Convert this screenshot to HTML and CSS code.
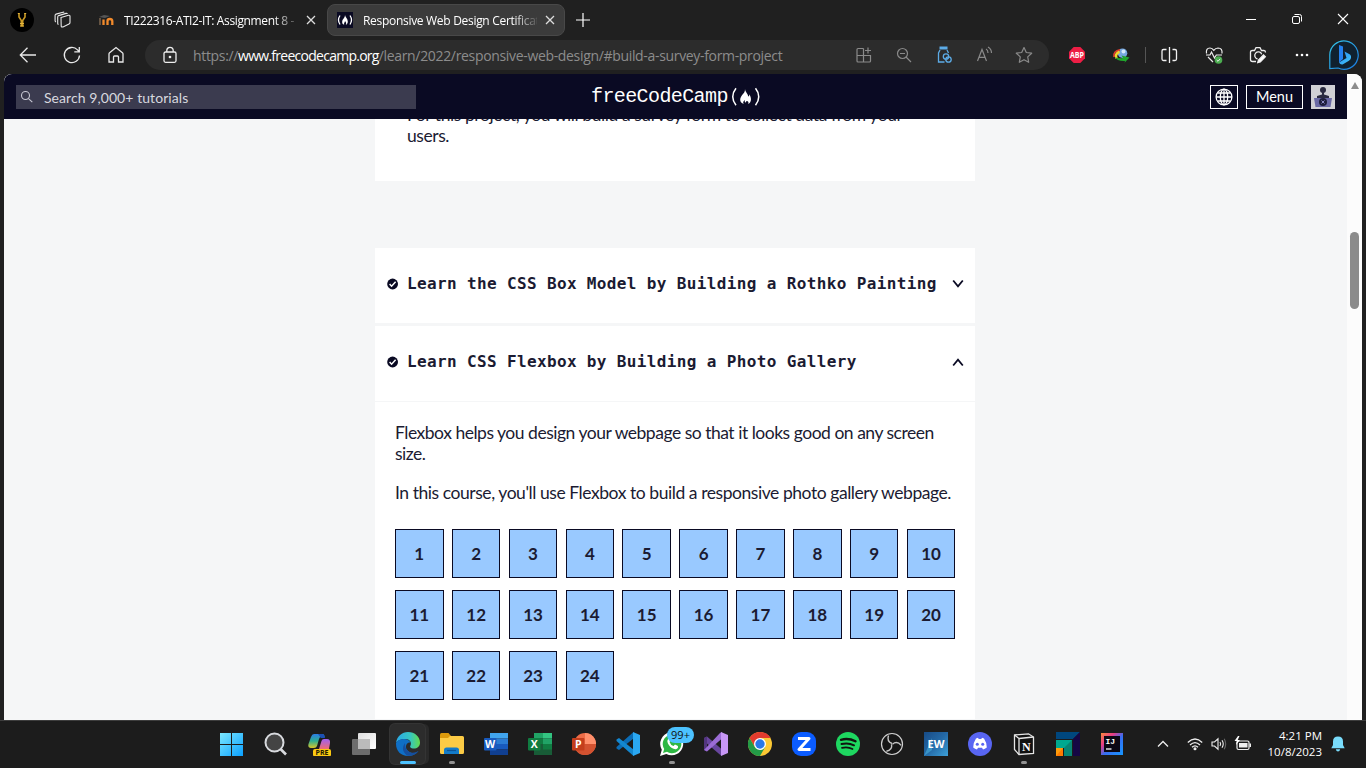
FILE: index.html
```html
<!DOCTYPE html>
<html lang="en">
<head>
<meta charset="utf-8">
<title>Responsive Web Design Certification</title>
<link rel="stylesheet" href="styles.css">
</head>
<body>
<div class="tabs">
  <svg class="profile" width="24" height="24" viewBox="0 0 24 24"><circle cx="12" cy="12" r="12" fill="#000"/><path d="M9 5.500v3.500l2.300 3.500v6M15 5.500v3.500l-2.300 3.500v6" fill="none" stroke="#c99a26" stroke-width="1.600"/><path d="M7.800 5.500h2M14.200 5.500h2M10 15.500h4M10 18h4" stroke="#e4b53c"/></svg>
  <svg class="workspaces" width="18" height="18" viewBox="0 0 18 18" fill="none" stroke="#e8e8e8" stroke-width="1.100"><path d="M7 6.500l7.500-2.200q1.500-.3 1.500 1v6.200q0 1-1 1.500L9 15.900q-1.800.5-1.800-1zM4.500 13.500q-.8-.3-.8-1.300V6q0-1 1-1.400L12 2.400q1-.3 1.500.5M2 11q-.9-.4-.9-1.300V4.500q0-1 1-1.400L9 1.200q.7-.2 1.300.2"/></svg>
  <div class="tab">
    <svg class="favicon" width="16" height="16" viewBox="0 0 16 16"><path d="M1 5L6 3l6 1-5 2z" fill="#555"/><path d="M2 13V6" stroke="#6d5a48" stroke-width="1.800"/><path d="M5.500 13V7.500M9.500 13V9q0-2 2.300-2t2.500 2v4" fill="none" stroke="#f18a2c" stroke-width="2.300"/></svg>
    <span class="title title-a">TI222316-ATI2-IT: Assignment 8 -</span>
    <svg class="close" width="10" height="10" viewBox="0 0 10 10" stroke="#ddd" stroke-width="1.300"><path d="M1 1l8 8M9 1L1 9"/></svg>
  </div>
  <div class="tab active">
    <svg class="favicon" width="16" height="16" viewBox="0 0 16 16"><path fill="#0a0a23" d="M0 0h16v16H0z"/><path d="M3 3.500q-3 4.500 0 9M13 3.500q3 4.500 0 9" fill="none" stroke="#fff" stroke-width="1.300"/><path d="M8 3c.2 2 2.800 3.500 2.800 6.500 0 2-1 3-2 3.300 1-2-.2-2.800-.8-3.800 0 1.500-1.500 2-.8 3.800-1.500-.4-2.200-1.600-2-3.300C5.400 7 8 6 8 3z" fill="#fff"/></svg>
    <span class="title title-b">Responsive Web Design Certificat</span>
    <svg class="close" width="10" height="10" viewBox="0 0 10 10" stroke="#ddd" stroke-width="1.300"><path d="M1 1l8 8M9 1L1 9"/></svg>
  </div>
  <svg class="newtab" width="14" height="14" viewBox="0 0 14 14" stroke="#fff" stroke-width="1.200"><path d="M7 0v14M0 7h14"/></svg>
  <div class="wincontrols">
    <svg width="46" height="20" viewBox="0 0 46 20"><path d="M18 10.500h10" stroke="#fff"/></svg>
    <svg width="46" height="20" viewBox="0 0 46 20" fill="none" stroke="#fff"><rect x="18.500" y="7.500" width="7" height="7" rx="1.500"/><path d="M20.500 5.500h5q2 0 2 2v5"/></svg>
    <svg width="46" height="20" viewBox="0 0 46 20" stroke="#fff" stroke-width="1.100"><path d="M18 5l10 10M28 5L18 15"/></svg>
  </div>
</div>

<div class="toolbar">
  <svg class="tool" viewBox="0 0 44 24" fill="none" stroke="#e8e8e8" stroke-width="1.300"><path d="M30 12H14.500M21.500 4.800L14.300 12l7.200 7.200"/></svg>
  <svg class="tool" viewBox="0 0 44 24" fill="none" stroke="#e8e8e8" stroke-width="1.300"><path d="M29.500 12.500a7.600 7.600 0 1 1-2-5.600l1.500 1.600M29.300 4v4.800h-5"/></svg>
  <svg class="tool" viewBox="0 0 44 24" fill="none" stroke="#e8e8e8" stroke-width="1.300"><path d="M15 19V11q0-.8.600-1.300L22 4.500l6.400 5.200q.6.500.6 1.300V19h-4.500v-5q0-1-1-1h-3q-1 0-1 1v5z"/></svg>
  <div class="address">
    <svg class="lock" width="16" height="18" viewBox="0 0 16 18" fill="none" stroke="#eee" stroke-width="1.300"><rect x="2" y="6" width="12" height="10.300" rx="1.500"/><path d="M4.800 6V4.500a3.200 3.200 0 0 1 6.400 0V6"/><circle cx="8" cy="11" r=".7" fill="#eee"/></svg>
    <span class="url">https://<b>www.freecodecamp.org</b>/learn/2022/responsive-web-design/#build-a-survey-form-project</span>
    <div class="addr-icons">
      <svg width="40" height="20" viewBox="0 0 40 20" fill="none" stroke="#8a8a8a" stroke-width="1.200"><path d="M19.500 3.500H14q-1 0-1 1V16q0 1 1 1h11.500q1 0 1-1v-5.500H13M19.500 3.500V17M24 2.500v6M21 5.500h6"/></svg>
      <svg width="40" height="20" viewBox="0 0 40 20" fill="none" stroke="#8a8a8a" stroke-width="1.200"><circle cx="18.500" cy="8.500" r="5"/><path d="M16 8.500h5M22 12l5 5"/></svg>
      <svg width="40" height="20" viewBox="0 0 40 20" fill="none" stroke="#5cabe6" stroke-width="1.300"><path d="M15.500 3h8" stroke-width="3"/><path d="M16 5l-1.500 3v9h6M23 5l1.500 3"/><circle cx="22" cy="11.500" r="2.700"/><circle cx="24.500" cy="14.500" r="2.700"/></svg>
      <svg width="40" height="20" viewBox="0 0 40 20" fill="none" stroke="#8a8a8a" stroke-width="1.200"><path d="M13.500 16l4.500-11.500L22.500 16M15 12.300h6M22 4q2 1 2 4M24 2q3.500 2 3.500 6"/></svg>
      <svg width="40" height="20" viewBox="0 0 40 20" fill="none" stroke="#8a8a8a" stroke-width="1.200"><path d="M20 2.500l2.300 5 5.400.7-4 3.700 1 5.400-4.700-2.600-4.700 2.600 1-5.400-4-3.700 5.400-.7z" stroke-linejoin="round"/></svg>
    </div>
  </div>
  <svg class="tool abp" viewBox="0 0 44 24"><path d="M18.700 4h6.600L30 8.700v6.600L25.300 20h-6.600L14 15.300V8.700z" fill="#ed1e45"/><text x="22" y="15" text-anchor="middle" textLength="14" lengthAdjust="spacingAndGlyphs" class="badge-text">ABP</text></svg>
  <svg class="tool" viewBox="0 0 44 24"><circle cx="23.500" cy="10.200" r="4.800" fill="#76a7df"/><circle cx="24.500" cy="8.500" r="2" fill="#d4e9fa"/><path d="M21 7q-7 1-6 7" fill="none" stroke="#dd3b2c" stroke-width="1.800"/><path d="M20.500 8.800q-5 2-3 6.500" fill="none" stroke="#f2d52f" stroke-width="2.600"/><path d="M16 14q2 4.500 10 4l-.5 1.800 5-5.300-8-2 1.500 2.500q-5 1-8-1z" fill="#20a62c"/></svg>
  <i class="divider"></i>
  <svg class="tool" viewBox="0 0 44 24" fill="none" stroke="#f0f0f0" stroke-width="1.300"><path d="M22.500 4v16M19.500 6.500h-3q-1.500 0-1.500 1.500v8q0 1.500 1.500 1.500h3M25.500 6.500h2.500q1.500 0 1.500 1.500v8q0 1.500-1.500 1.500h-2.500"/></svg>
  <svg class="tool" viewBox="0 0 44 24" fill="none" stroke="#eee" stroke-width="1.200"><path d="M15.500 10.500Q14.700 5 19 5q2.300 0 3.800 2.300Q24.500 5 27 5q4.600.2 4 5.500M17 14l5 5M15 12h4l1.500-3 3 6 1.800-3H31"/><circle cx="27.500" cy="17" r="3.800" fill="#4cad50" stroke="none"/><path d="M25.700 17l1.300 1.300 2.200-2.500" stroke-width="1"/></svg>
  <svg class="tool cam" viewBox="0 0 44 24" fill="none" stroke="#eee" stroke-width="1.300"><path d="M20 18.500h-3.500q-2 0-2-2V9q0-1.500 2-1.500h2l1.500-2.800h4l1.500 2.800H28q1.500 0 1.500 2"/><path d="M21.500 16a3.600 3.600 0 1 1 4.200-4.800"/><path d="M21.800 19.500l.7-2.500 5-5 1.800 1.800-5 5z" fill="#fff"/></svg>
  <svg class="tool" viewBox="0 0 44 24" fill="#fff"><circle cx="17" cy="12" r="1.300"/><circle cx="22" cy="12" r="1.300"/><circle cx="27" cy="12" r="1.300"/></svg>
  <svg class="bing" width="32" height="32" viewBox="0 0 32 32"><defs><linearGradient id="bg" x2="1" y2="1"><stop stop-color="#35c7e8"/><stop offset="1" stop-color="#1977e0"/></linearGradient><linearGradient id="bb" x2="1" y2="1"><stop stop-color="#2589f5"/><stop offset="1" stop-color="#45c9f6"/></linearGradient></defs><path d="M1.800 29.700V16A14.200 14.200 0 1 1 10 29z" fill="#10212f" stroke="url(#bg)" stroke-width="1.200"/><path d="M11 6l4 1.600v12.500l-4 3.300z" fill="#2480ef"/><path d="M16.500 12.500l5.500 3q1.500 1 1 3.500-.5 2-2.500 3l-5.500 3.200q-2.500.8-4-1.800l7.500-4.500z" fill="url(#bb)"/></svg>
</div>

<div class="viewport">
  <div class="page">
    <header class="site-header">
      <div class="search">
        <svg width="14" height="14" viewBox="0 0 14 14" fill="none" stroke="#c9c9d4" stroke-width="1.100"><circle cx="5.500" cy="5.500" r="4"/><path d="M8.500 8.700l3.800 3.500"/></svg>
        <span>Search 9,000+ tutorials</span>
      </div>
      <div class="logo"><span class="word">freeCodeCamp</span><svg width="34" height="22" viewBox="0 0 34 22"><path d="M8 2.300q-6.500 8.300 0 17M27.500 2.300q6.500 8.300 0 17" fill="none" stroke="#fff" stroke-width="1.500"/><path d="M17 3c.4 3.500 3 4.500 3.200 7.500.9-.3 1.200-1.200 1-2.300 2.500 3.500 2.600 8-1 9.800 1-2-.7-3.300-1.500-3-.7.300-.4 1.500-1.200 1.500-.9 0-.8-1.500-.5-2.500-2 1.500-2.300 2.800-1.200 4-4.500-1.500-4.300-5.500-2-8.500C15.300 7.500 17.300 6 17 3z" fill="#fff"/></svg></div>
      <div class="nav">
        <div class="lang"><svg width="18" height="18" viewBox="0 0 18 18" fill="none" stroke="#fff" stroke-width="1.300"><circle cx="9" cy="9" r="7.900"/><ellipse cx="9" cy="9" rx="3.700" ry="7.900"/><path d="M9 1v16M1 9h16M2.500 5h13M2.500 13h13"/></svg></div>
        <div class="menu">Menu</div>
        <svg class="avatar" width="24" height="24" viewBox="0 0 24 24"><path d="M0 0h24v24H0z" fill="#d0d0d5"/><circle cx="12" cy="5" r="3" fill="#2a2a40"/><path d="M11 7h2v2.500l5 1.500v3H6v-3l5-1.500z" fill="#2a2a40"/><path d="M3 13h18l-1.500 9h-15z" fill="#6a69a5"/><circle cx="12" cy="17" r="4" fill="#1e1e3c"/><path d="M10.500 15.500l3 3M13.500 15.500l-3 3" stroke="#8c8bc4"/></svg>
      </div>
    </header>
    <main class="content">
      <section class="block intro"><p>For this project, you will build a survey form to collect data from your<br>users.</p></section>
      <section class="block course">
        <svg class="check" width="12" height="12" viewBox="0 0 12 12"><circle cx="5.600" cy="6" r="5.400" fill="#0a0a23"/><path d="M2.600 6l2 2.200 4-4.400" fill="none" stroke="#fff" stroke-width="1.500"/></svg>
        <h3>Learn the CSS Box Model by Building a Rothko Painting</h3>
        <svg class="chev" width="12" height="10" viewBox="0 0 12 10"><path d="M1.200 1.500L6 7.300l4.800-5.800" fill="none" stroke="#0a0a23" stroke-width="1.800"/></svg>
      </section>
      <section class="block course">
        <svg class="check" width="12" height="12" viewBox="0 0 12 12"><circle cx="5.600" cy="6" r="5.400" fill="#0a0a23"/><path d="M2.600 6l2 2.200 4-4.400" fill="none" stroke="#fff" stroke-width="1.500"/></svg>
        <h3>Learn CSS Flexbox by Building a Photo Gallery</h3>
        <svg class="chev" width="12" height="10" viewBox="0 0 12 10"><path d="M1.200 8.500L6 2.700l4.800 5.800" fill="none" stroke="#0a0a23" stroke-width="1.800"/></svg>
      </section>
      <section class="block details">
        <p class="p1">Flexbox helps you design your webpage so that it looks good on any screen<br>size.</p>
        <p class="p2">In this course, you'll use Flexbox to build a responsive photo gallery webpage.</p>
        <div class="steps"><a>1</a><a>2</a><a>3</a><a>4</a><a>5</a><a>6</a><a>7</a><a>8</a><a>9</a><a>10</a><a>11</a><a>12</a><a>13</a><a>14</a><a>15</a><a>16</a><a>17</a><a>18</a><a>19</a><a>20</a><a>21</a><a>22</a><a>23</a><a>24</a></div>
      </section>
    </main>
  </div>
  <div class="scrollbar"><i class="arrow"></i><i class="thumb"></i></div>
</div>

<footer class="taskbar">
  <div class="app"><svg viewBox="0 0 24 24"><defs><linearGradient id="w" x2="1" y2="1"><stop stop-color="#7ce8ff"/><stop offset="1" stop-color="#0aa0ff"/></linearGradient></defs><path d="M0 1h11v11H0zM12 1h11v11H12zM0 13h11v11H0zM12 13h11v11H12z" fill="url(#w)"/></svg></div>
  <div class="app"><svg viewBox="0 0 24 24"><circle cx="10.500" cy="10.500" r="9" fill="#444" stroke="#d8dade" stroke-width="2"/><path d="M16.500 17l5.500 5.500" stroke="#d8dade" stroke-width="2.600"/></svg></div>
  <div class="app"><svg viewBox="0 0 24 24"><defs><linearGradient id="c1" x2="0" y2="1"><stop stop-color="#2b7de6"/><stop offset=".5" stop-color="#2fae8f"/><stop offset="1" stop-color="#d8c72a"/></linearGradient><linearGradient id="c2" x2="0" y2="1"><stop stop-color="#a060f0"/><stop offset="1" stop-color="#f06d70"/></linearGradient></defs><path d="M6 2h8q3 0 2.500 3H13q-1.500 0-2 2l-2 7q-.7 2-3 2H3q-3.500 0-2.500-4l2.500-7q1-3 3-3z" fill="url(#c1)"/><path d="M10 2h4q2.500 0 3 4h-4z" fill="#1b4fb4"/><path d="M16 7h3q3.500 0 3 4l-1 6H11l2.500-8q.5-2 2.500-2z" fill="url(#c2)"/><rect x="5" y="17" width="18" height="7.500" rx="2" fill="#fbc912"/><text x="14" y="23.300" class="pre" text-anchor="middle" textLength="13" lengthAdjust="spacingAndGlyphs">PRE</text></svg></div>
  <div class="app"><svg viewBox="0 0 24 24"><defs><linearGradient id="tv" x2="1" y2="1"><stop stop-color="#ddd"/><stop offset="1" stop-color="#fff"/></linearGradient></defs><rect y="7" width="18" height="16" rx="1" fill="#6d6d6d"/><rect x="6" y="1" width="18" height="16" rx="1" fill="url(#tv)"/><path d="M6 7h12v10H6z" fill="#bbb"/></svg></div>
  <div class="app open"><svg viewBox="0 0 24 24"><defs><linearGradient id="e1" x2="1"><stop stop-color="#2aa9e8"/><stop offset=".6" stop-color="#36c6c0"/><stop offset="1" stop-color="#62dc4c"/></linearGradient></defs><path d="M0 11C1 4 6 0 12 0c7 0 12 5 12 10.500 0 4-3 6-6 6-3.500 0-4.500-1.500-3.500-3C16 10 13.500 7 9.500 7 4.500 7 1 9 0 11z" fill="url(#e1)"/><path d="M0 11c1.500-3 4.500-4 8-4 3 0 5.500 1.300 6.500 3.500-5-1-7 7 0 10 3 1.300 6 .3 8-1.500C20 22.500 16 24 12 24 5 24 0 19 0 12z" fill="#0f6fc6"/><path d="M9 11q-5 7 2 12.500 7 1.500 11.500-4.500-4 2.500-8 1.500-6-2-5.500-9.500z" fill="#164f9e"/></svg><i></i></div>
  <div class="app running"><svg viewBox="0 0 24 24"><path d="M0 2.500Q0 1 1.500 1h7L11 4v4H0z" fill="#dc9a0c"/><path d="M0 6h8l2-2h12.500Q24 4 24 5.500v15q0 1.500-1.500 1.500h-21Q0 22 0 20.500z" fill="#fccb45"/><path d="M4 22v-4q0-2.500 2.500-2.500h10Q19 15.500 19 18v4z" fill="#137bc8"/><path d="M7 18.500h9" stroke="#0b5496" stroke-width="1.200"/></svg><i></i></div>
  <div class="app"><svg viewBox="0 0 24 24"><path d="M6 1h18v5.500H6z" fill="#41a5ee"/><path d="M6 6.500h18V12H6z" fill="#2b7cd3"/><path d="M6 12h18v5.500H6z" fill="#185abd"/><path d="M6 17.500h18V23H6z" fill="#103f91"/><rect y="6" width="12.500" height="12.500" rx="1" fill="#185abd"/><text x="6.200" y="16" text-anchor="middle" class="office">W</text></svg></div>
  <div class="app"><svg viewBox="0 0 24 24"><path d="M6 1h9v5.500H6z" fill="#21a366"/><path d="M15 1h9v5.500h-9z" fill="#33c481"/><path d="M6 6.500h9V12H6z" fill="#107c41"/><path d="M15 6.500h9V12h-9z" fill="#21a366"/><path d="M6 12h18v11H6z" fill="#185c37"/><path d="M15 12h9v5.500h-9z" fill="#107c41"/><rect y="6" width="12.500" height="12.500" rx="1" fill="#107c41"/><text x="6.200" y="16" text-anchor="middle" class="office">X</text></svg></div>
  <div class="app"><svg viewBox="0 0 24 24"><circle cx="13" cy="12" r="11" fill="#ed6c47"/><path d="M13 1a11 11 0 0 1 11 11H13z" fill="#ff8f6b"/><path d="M2 12h22a11 11 0 0 1-22 0z" fill="#d35230"/><rect y="6" width="12.500" height="12.500" rx="1" fill="#c43e1c"/><text x="6.200" y="16" text-anchor="middle" class="office">P</text></svg></div>
  <div class="app"><svg viewBox="0 0 24 24"><path d="M17.500 0v6.500L3 18 .5 16.500V15z" fill="#0b6cb5"/><path d="M.5 7.500L3 6l14.500 11.500V24L.5 9z" fill="#1387d0"/><path d="M17 0l7 3v18l-7 3z" fill="#2aa8f2"/></svg></div>
  <div class="app running"><svg viewBox="0 0 24 24"><path d="M0 24l1.800-6.300A11.500 11.500 0 1 1 6.300 22z" fill="#fff"/><path d="M3 21l1.200-4A9.300 9.300 0 1 1 7 19.800z" fill="#2db742"/><path d="M8.500 6.500c-4 3.500 3.500 12 8 10.500q2-.7 1.500-3l-3-1.500-1.500 1.500q-3-1-4-4l1.200-1.200z" fill="#fff"/></svg><i></i><b class="count">99+</b></div>
  <div class="app"><svg viewBox="0 0 24 24"><path d="M0 6l3-1.500L17.500 17v7L0 9z" fill="#68469e"/><path d="M0 6v12l3 1.500V4.500z" fill="#52357e"/><path d="M17.500 0v7L3 19.500 0 18 16 1z" fill="#9b6cd5"/><path d="M17 0l7 3v18l-7 3z" fill="#c797f5"/></svg></div>
  <div class="app"><svg viewBox="0 0 24 24"><circle cx="12" cy="12" r="12" fill="#fcc934"/><path d="M1.600 6A12 12 0 0 1 22.400 6H12l-5.200 9z" fill="#e33b2e"/><path d="M1.600 6A12 12 0 0 0 12 24l5.200-9H6.800z" fill="#239b47"/><circle cx="12" cy="12" r="6" fill="#fff"/><circle cx="12" cy="12" r="4.700" fill="#2878e8"/></svg></div>
  <div class="app"><svg viewBox="0 0 24 24"><rect width="24" height="24" rx="9" fill="#0b5cff"/><path d="M6 6.500h11L7 17.500h11.500" fill="none" stroke="#fff" stroke-width="3" stroke-linejoin="round"/></svg></div>
  <div class="app"><svg viewBox="0 0 24 24" fill="none" stroke="#10130f" stroke-linecap="round"><circle cx="12" cy="12" r="12" fill="#1ed760" stroke="none"/><path d="M5 7.800q7.500-2 14.500 1.500" stroke-width="2.400"/><path d="M5.500 12q7-1.700 12.500 1.300" stroke-width="2"/><path d="M6 15.800q6-1.300 10.500 1.200" stroke-width="1.700"/></svg></div>
  <div class="app"><svg viewBox="0 0 24 24"><circle cx="12" cy="12" r="10.500" fill="#161616" stroke="#d0d0d0" stroke-width="1.200"/><g fill="none" stroke="#c4c4c4" stroke-width="1.400"><path d="M8.500 3.500Q6.500 9.500 12 11.500"/><path d="M8.500 3.500Q6.500 9.500 12 11.500" transform="rotate(120 12 12)"/><path d="M8.500 3.500Q6.500 9.500 12 11.500" transform="rotate(240 12 12)"/></g></svg></div>
  <div class="app"><svg viewBox="0 0 24 24"><defs><linearGradient id="ew" x2="1" y2="1"><stop stop-color="#174b86"/><stop offset=".5" stop-color="#2469a6"/><stop offset="1" stop-color="#3da0d8"/></linearGradient></defs><path d="M0 0h24v24H0z" fill="url(#ew)"/><path d="M0 24L8 6v12z" fill="#4fc0e8" opacity=".5"/><text x="12" y="16" text-anchor="middle" textLength="17" lengthAdjust="spacingAndGlyphs" class="office ew">EW</text></svg></div>
  <div class="app"><svg viewBox="0 0 24 24"><circle cx="12" cy="12" r="12" fill="#5865f2"/><path d="M8 6.500l2-.7.7 1.200h2.600l.7-1.200 2 .7q3 4.500 2.800 9-2 1.500-3.800 2l-1-1.700h-4l-1 1.700q-2-.5-3.800-2Q5 11 8 6.500z" fill="#fff"/><circle cx="9.300" cy="12.300" r="1.500" fill="#5865f2"/><circle cx="14.700" cy="12.300" r="1.500" fill="#5865f2"/></svg></div>
  <div class="app running"><svg viewBox="0 0 24 24"><path d="M2.500 3l14-1.200L21.500 5v16.500L7 22.500l-4.500-5z" fill="#111" stroke="#e5e5e5" stroke-width="1.300"/><path d="M2.500 3L7 6.500v16M7 6.500L21.500 5" fill="none" stroke="#e5e5e5" stroke-width="1.300"/><text x="14.300" y="18.500" text-anchor="middle" class="notion">N</text></svg><i></i></div>
  <div class="app"><svg viewBox="0 0 24 24"><path d="M0 0h24L17 7H0z" fill="#00477e"/><path d="M24 0v24h-7V7z" fill="#160644"/><path d="M0 8h16v16H8v-8H0z" fill="#00a98f"/><path d="M16 8v16H8v-8z" fill="#078573"/><path d="M0 16h7v8H0z" fill="#ff9d0b"/><path d="M7 16v8H0z" fill="#ff7a00"/></svg></div>
  <div class="app"><svg viewBox="0 0 24 24"><defs><linearGradient id="ij" x2="1" y2="1"><stop stop-color="#f98b3c"/><stop offset=".3" stop-color="#e83b85"/><stop offset=".55" stop-color="#376df2"/><stop offset="1" stop-color="#1598ff"/></linearGradient></defs><path d="M1 1h22v22H1z" fill="url(#ij)"/><path d="M4 4h16v16H4z" fill="#0b0714"/><text x="5.500" y="12" class="ij">IJ</text><path d="M6 17h5.500" stroke="#fff" stroke-width="1.300"/></svg></div>
  <div class="tray">
    <svg width="12" height="10" viewBox="0 0 12 10" fill="none" stroke="#eee" stroke-width="1.300"><path d="M1 7.500l5-5 5 5"/></svg>
    <svg class="wifi" width="16" height="14" viewBox="0 0 16 14" fill="none" stroke="#eee" stroke-width="1.300"><path d="M.8 5.500q7.200-7 14.400 0M3 8q5-4.800 10 0M5 10.300q3-2.800 6 0"/><circle cx="8" cy="11.800" r=".9" fill="#eee"/></svg>
    <svg class="sound" width="16" height="14" viewBox="0 0 16 14" fill="none" stroke="#eee" stroke-width="1.100"><path d="M1 5h2.500L7 1.800v10.400L3.500 9H1zM9 5q1.300 2 0 4M11 3.300q2.500 3.700 0 7.400"/><path d="M13.200 1.800q3 5.200 0 10.400" stroke="#666"/></svg>
    <svg class="battery" width="18" height="16" viewBox="0 0 18 16"><rect x="3" y="5" width="12" height="8.500" rx="1.500" fill="none" stroke="#eee" stroke-width="1.200"/><path d="M5 7h8.500v4.500H5zM15.500 7.500H17V11h-1.500z" fill="#eee"/><path d="M4 0L.5 5h2.300L2 9l4-5H3.700L5.500 0z" fill="#fff"/></svg>
    <div class="clock">4:21 PM<br>10/8/2023</div>
    <svg class="bell" width="14" height="16" viewBox="0 0 14 16" fill="#79dcfb"><path d="M7 .5q5 0 5 5V9l1.700 3.300H.3L2 9V5.500q0-5 5-5zM4.800 13.300h4.400Q8.700 15.500 7 15.500t-2.200-2.200z"/></svg>
  </div>
</footer>
</body>
</html>
```
FILE: styles.css
```css
* { box-sizing: border-box; }
body { margin: 0; width: 1366px; height: 768px; overflow: hidden; background: #202020; font-family: "Open Sans", sans-serif; display: flex; flex-direction: column; }
svg { display: block; flex: none; }

.tabs { height: 36px; flex: none; display: flex; align-items: center; padding-top: 4px; }
.profile { margin-left: 10px; }
.workspaces { margin-left: 20px; }
.tab { height: 32px; display: flex; align-items: center; margin-left: 17px; width: 237px; padding-left: 9px; white-space: nowrap; color: #fff; }
.tab.active { margin-left: 1px; width: 238px; background: #3b3b3b; border: 1px solid #484848; border-radius: 8px; }
.title { font-size: 12px; margin-left: 10px; overflow: hidden; flex: none; width: 174px; -webkit-mask-image: linear-gradient(90deg, #000 86%, transparent 102%); mask-image: linear-gradient(90deg, #000 86%, transparent 102%); }
.title-a { letter-spacing: -.37px; }
.title-b { letter-spacing: -.3px; }
.close { margin-left: 8px; }
.newtab { margin-left: 11px; }
.wincontrols { display: flex; margin-left: auto; padding-bottom: 3px; }

.toolbar { height: 38px; flex: none; display: flex; align-items: center; padding-left: 6px; }
.tool { width: 44px; height: 24px; }
.address { width: 904px; height: 30px; margin-left: 7px; background: #2c2c2c; border-radius: 15px; display: flex; align-items: center; padding: 0 5px 0 17px; }
.url { margin-left: 15px; font-size: 14px; color: #8c8c8c; white-space: nowrap; letter-spacing: -.33px; }
.url b { font-weight: 400; color: #fff; letter-spacing: -.74px; }
.addr-icons { display: flex; margin-left: auto; }
.abp { margin-left: 6px; }
.badge-text { font: bold 8px "Open Sans", sans-serif; fill: #fff; }
.divider { width: 1px; height: 16px; background: #555; margin: 0 1px 0 2px; }
.cam { margin-left: 1px; }
.bing { margin-left: 4px; }

.viewport { height: 646px; flex: none; margin: 0 4px; display: flex; border-radius: 8px 8px 0 0; overflow: hidden; background: #fff; }
.page { width: 1343px; background: #f5f6f7; color: #1b1b32; font-family: Lato, sans-serif; display: flex; flex-direction: column; }
.site-header { height: 45px; flex: none; background: #0a0a23; display: grid; grid-template-columns: 400px 1fr 125px; align-items: center; padding: 0 12px; color: #fff; z-index: 1; }
.search { height: 24px; background: #3b3b4f; display: flex; align-items: center; padding-left: 4px; font-size: 14px; color: #d8d8df; letter-spacing: .07px; }
.search span { margin-left: 10px; padding-top: 1px; }
.logo { display: flex; align-items: center; margin-left: 175px; }
.word { font: 20px "Liberation Mono", monospace; letter-spacing: -.6px; }
.nav { display: flex; gap: 8px; }
.lang { width: 28px; height: 24px; border: 1px solid #fff; display: grid; place-items: center; }
.menu { width: 57px; height: 24px; border: 1px solid #fff; font-size: 14.500px; display: grid; place-items: center; }
.content { width: 600px; margin-left: 371px; }
.block { background: #fff; }
.intro { height: 62px; margin-bottom: 67px; }
.intro p { margin: -15px 0 0; padding-left: 32px; letter-spacing: -.43px; }
.intro::before { content: ""; display: table; }
p { font-size: 17.500px; line-height: 21px; white-space: nowrap; letter-spacing: -.48px; }
.course { height: 75px; margin-bottom: 3px; display: flex; align-items: center; padding: 0 11px 4px 12px; }
.course h3 { margin: 0 0 0 8px; font: bold 16px "DejaVu Sans Mono", monospace; letter-spacing: .36px; white-space: nowrap; }
.chev { margin-left: auto; }
.details { height: 317px; margin-top: -2px; padding: 20px 20px 0; }
.details p { margin: 0 0 18px; }
.details .p2 { letter-spacing: -.44px; }
.steps { display: grid; grid-template-columns: repeat(10, 48.6px); column-gap: 8.28px; row-gap: 12px; margin-top: 26px; }
.steps a { height: 49px; border: 1px solid #0a0a23; background: #99c9ff; font-size: 17px; font-weight: 700; display: grid; place-items: center; padding-bottom: 1px; }
.scrollbar { width: 15px; background: #fcfcfc; display: flex; flex-direction: column; align-items: center; }
.arrow { border: 4px solid transparent; border-top: 0; border-bottom: 7px solid #8c8c8c; margin-top: 8px; }
.thumb { width: 9px; height: 77px; border-radius: 5px; background: #8b8b8b; margin-top: 143px; }

.taskbar { height: 48px; flex: none; background: #1c1c1c; border-top: 1px solid #3d3d3d; display: flex; align-items: center; padding: 0 0 1px 210px; }
.app { width: 44px; height: 40px; position: relative; display: grid; place-items: center; flex: none; }
.app > svg { width: 24px; height: 24px; }
.open { background: #2c2c2c; border-radius: 5px; width: 35px; margin: 0 5px 0 4px; box-shadow: 0 0 0 1px #343434, 4px 0 0 #292929; }
.running i, .open i { position: absolute; left: 50%; bottom: 0; width: 6px; height: 3px; border-radius: 2px; background: #929292; transform: translateX(-50%); }
.open i { width: 16px; background: #4cc2ff; }
.count { position: absolute; left: 17px; top: 3px; width: 27px; height: 16px; border-radius: 8px; background: #4cc2ff; color: #111; font-weight: 400; font-size: 11px; line-height: 16px; text-align: center; }
.pre { font: bold 6.500px "Open Sans", sans-serif; fill: #201a00; }
.office { font: bold 10.500px "Open Sans", sans-serif; fill: #fff; }
.notion { font: bold 12px "Liberation Serif", serif; fill: #fff; }
.ij { font: bold 8px "Liberation Mono", monospace; fill: #fff; }
.tray { display: flex; align-items: center; color: #fff; flex: 1; padding-left: 23px; }
.wifi { margin-left: 18px; }
.sound { margin-left: 8px; }
.battery { margin-left: 7px; }
.clock { margin-left: auto; text-align: right; font-size: 11.500px; line-height: 16px; }
.bell { margin: 0 21px 0 9px; }
```
